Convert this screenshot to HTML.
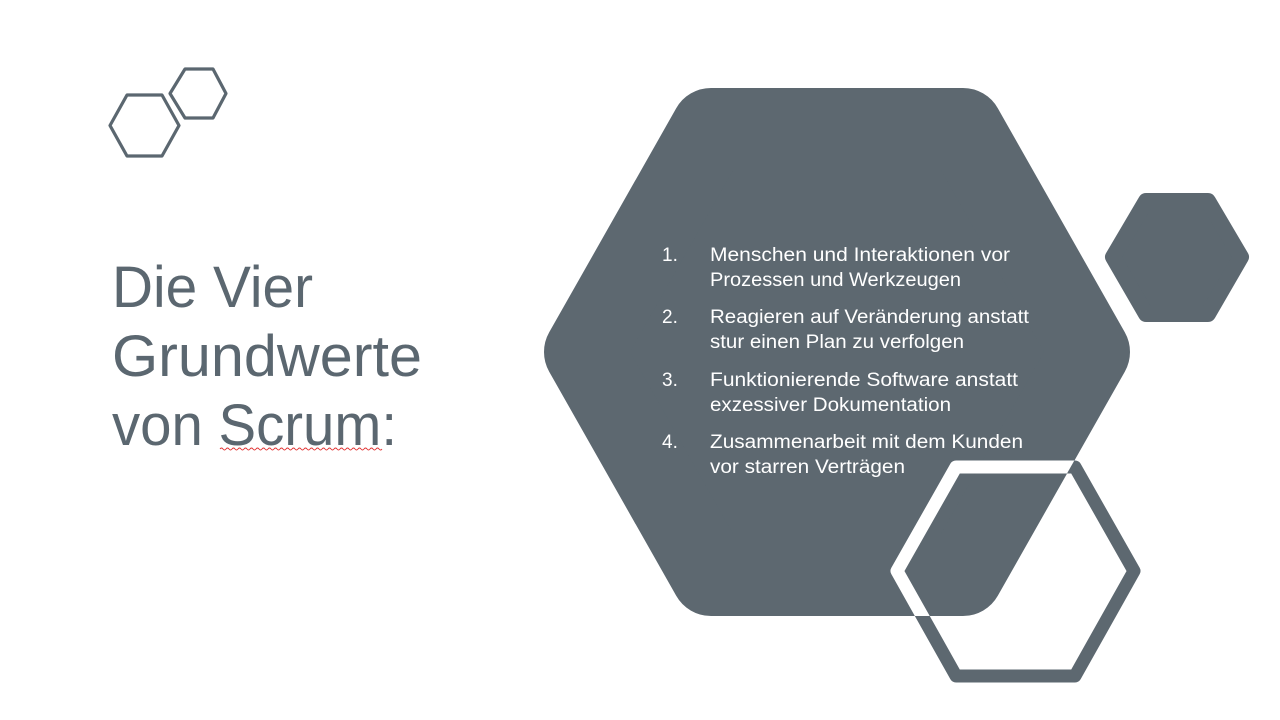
<!DOCTYPE html>
<html><head><meta charset="utf-8"><style>
html,body{margin:0;padding:0;background:#fff;width:1280px;height:720px;overflow:hidden}
svg{display:block}
text{font-family:"Liberation Sans",sans-serif}
</style></head><body>
<svg width="1280" height="720" viewBox="0 0 1280 720" xmlns="http://www.w3.org/2000/svg">
<defs>
<clipPath id="bigclip">
<polygon points="584,352 711,128 963,128 1090,352 963,576 711,576" stroke="#000" stroke-width="80" stroke-linejoin="round"/>
<path d="M538,352 L688,88 L986,88 L1136,352 L986,616 L688,616 Z"/>
</clipPath>
</defs>
<polygon points="110,125.5 127,95 162,95 179,125.5 162,156 127,156" fill="none" stroke="#5b6770" stroke-width="3.2" stroke-linejoin="round"/>
<polygon points="170,93.5 185,69 213,69 226,93.5 213,118 185,118" fill="none" stroke="#5b6770" stroke-width="3.2" stroke-linejoin="round"/>
<polygon points="584,352 711,128 963,128 1090,352 963,576 711,576" fill="#5d6870" stroke="#5d6870" stroke-width="80" stroke-linejoin="round"/>
<polygon points="1113,257 1146,201 1208,201 1241,257 1208,314 1146,314" fill="#5d6870" stroke="#5d6870" stroke-width="16" stroke-linejoin="round"/>
<polygon points="897,571 956,467 1075,467 1134,571 1075,676 956,676" fill="none" stroke="#5d6870" stroke-width="13" stroke-linejoin="round"/>
<g clip-path="url(#bigclip)">
<polygon points="897,571 956,467 1075,467 1134,571 1075,676 956,676" fill="none" stroke="#fff" stroke-width="13" stroke-linejoin="round"/>
</g>
<g fill="#5b6770" font-size="58">
<text x="112" y="307" textLength="201" lengthAdjust="spacingAndGlyphs">Die Vier</text>
<text x="112" y="376" textLength="310" lengthAdjust="spacingAndGlyphs">Grundwerte</text>
<text x="112" y="445" textLength="285" lengthAdjust="spacingAndGlyphs">von Scrum:</text>
</g>
<path d="M220,449 q1.5,-2 3,0 t3,0 t3,0 t3,0 t3,0 t3,0 t3,0 t3,0 t3,0 t3,0 t3,0 t3,0 t3,0 t3,0 t3,0 t3,0 t3,0 t3,0 t3,0 t3,0 t3,0 t3,0 t3,0 t3,0 t3,0 t3,0 t3,0 t3,0 t3,0 t3,0 t3,0 t3,0 t3,0 t3,0 t3,0 t3,0 t3,0 t3,0 t3,0 t3,0 t3,0 t3,0 t3,0 t3,0 t3,0 t3,0 t3,0 t3,0 t3,0 t3,0 t3,0 t3,0 t3,0 t3,0" fill="none" stroke="#e03030" stroke-width="0.9"/>
<g fill="#fff" font-size="19">
<text x="662" y="261">1.</text>
<text x="710" y="261" textLength="300" lengthAdjust="spacingAndGlyphs">Menschen und Interaktionen vor</text>
<text x="710" y="286" textLength="251" lengthAdjust="spacingAndGlyphs">Prozessen und Werkzeugen</text>
<text x="662" y="323">2.</text>
<text x="710" y="323" textLength="319" lengthAdjust="spacingAndGlyphs">Reagieren auf Veränderung anstatt</text>
<text x="710" y="348" textLength="254" lengthAdjust="spacingAndGlyphs">stur einen Plan zu verfolgen</text>
<text x="662" y="386">3.</text>
<text x="710" y="386" textLength="308" lengthAdjust="spacingAndGlyphs">Funktionierende Software anstatt</text>
<text x="710" y="411" textLength="241" lengthAdjust="spacingAndGlyphs">exzessiver Dokumentation</text>
<text x="662" y="448">4.</text>
<text x="710" y="448" textLength="313" lengthAdjust="spacingAndGlyphs">Zusammenarbeit mit dem Kunden</text>
<text x="710" y="473" textLength="195" lengthAdjust="spacingAndGlyphs">vor starren Verträgen</text>
</g>
</svg>
</body></html>
